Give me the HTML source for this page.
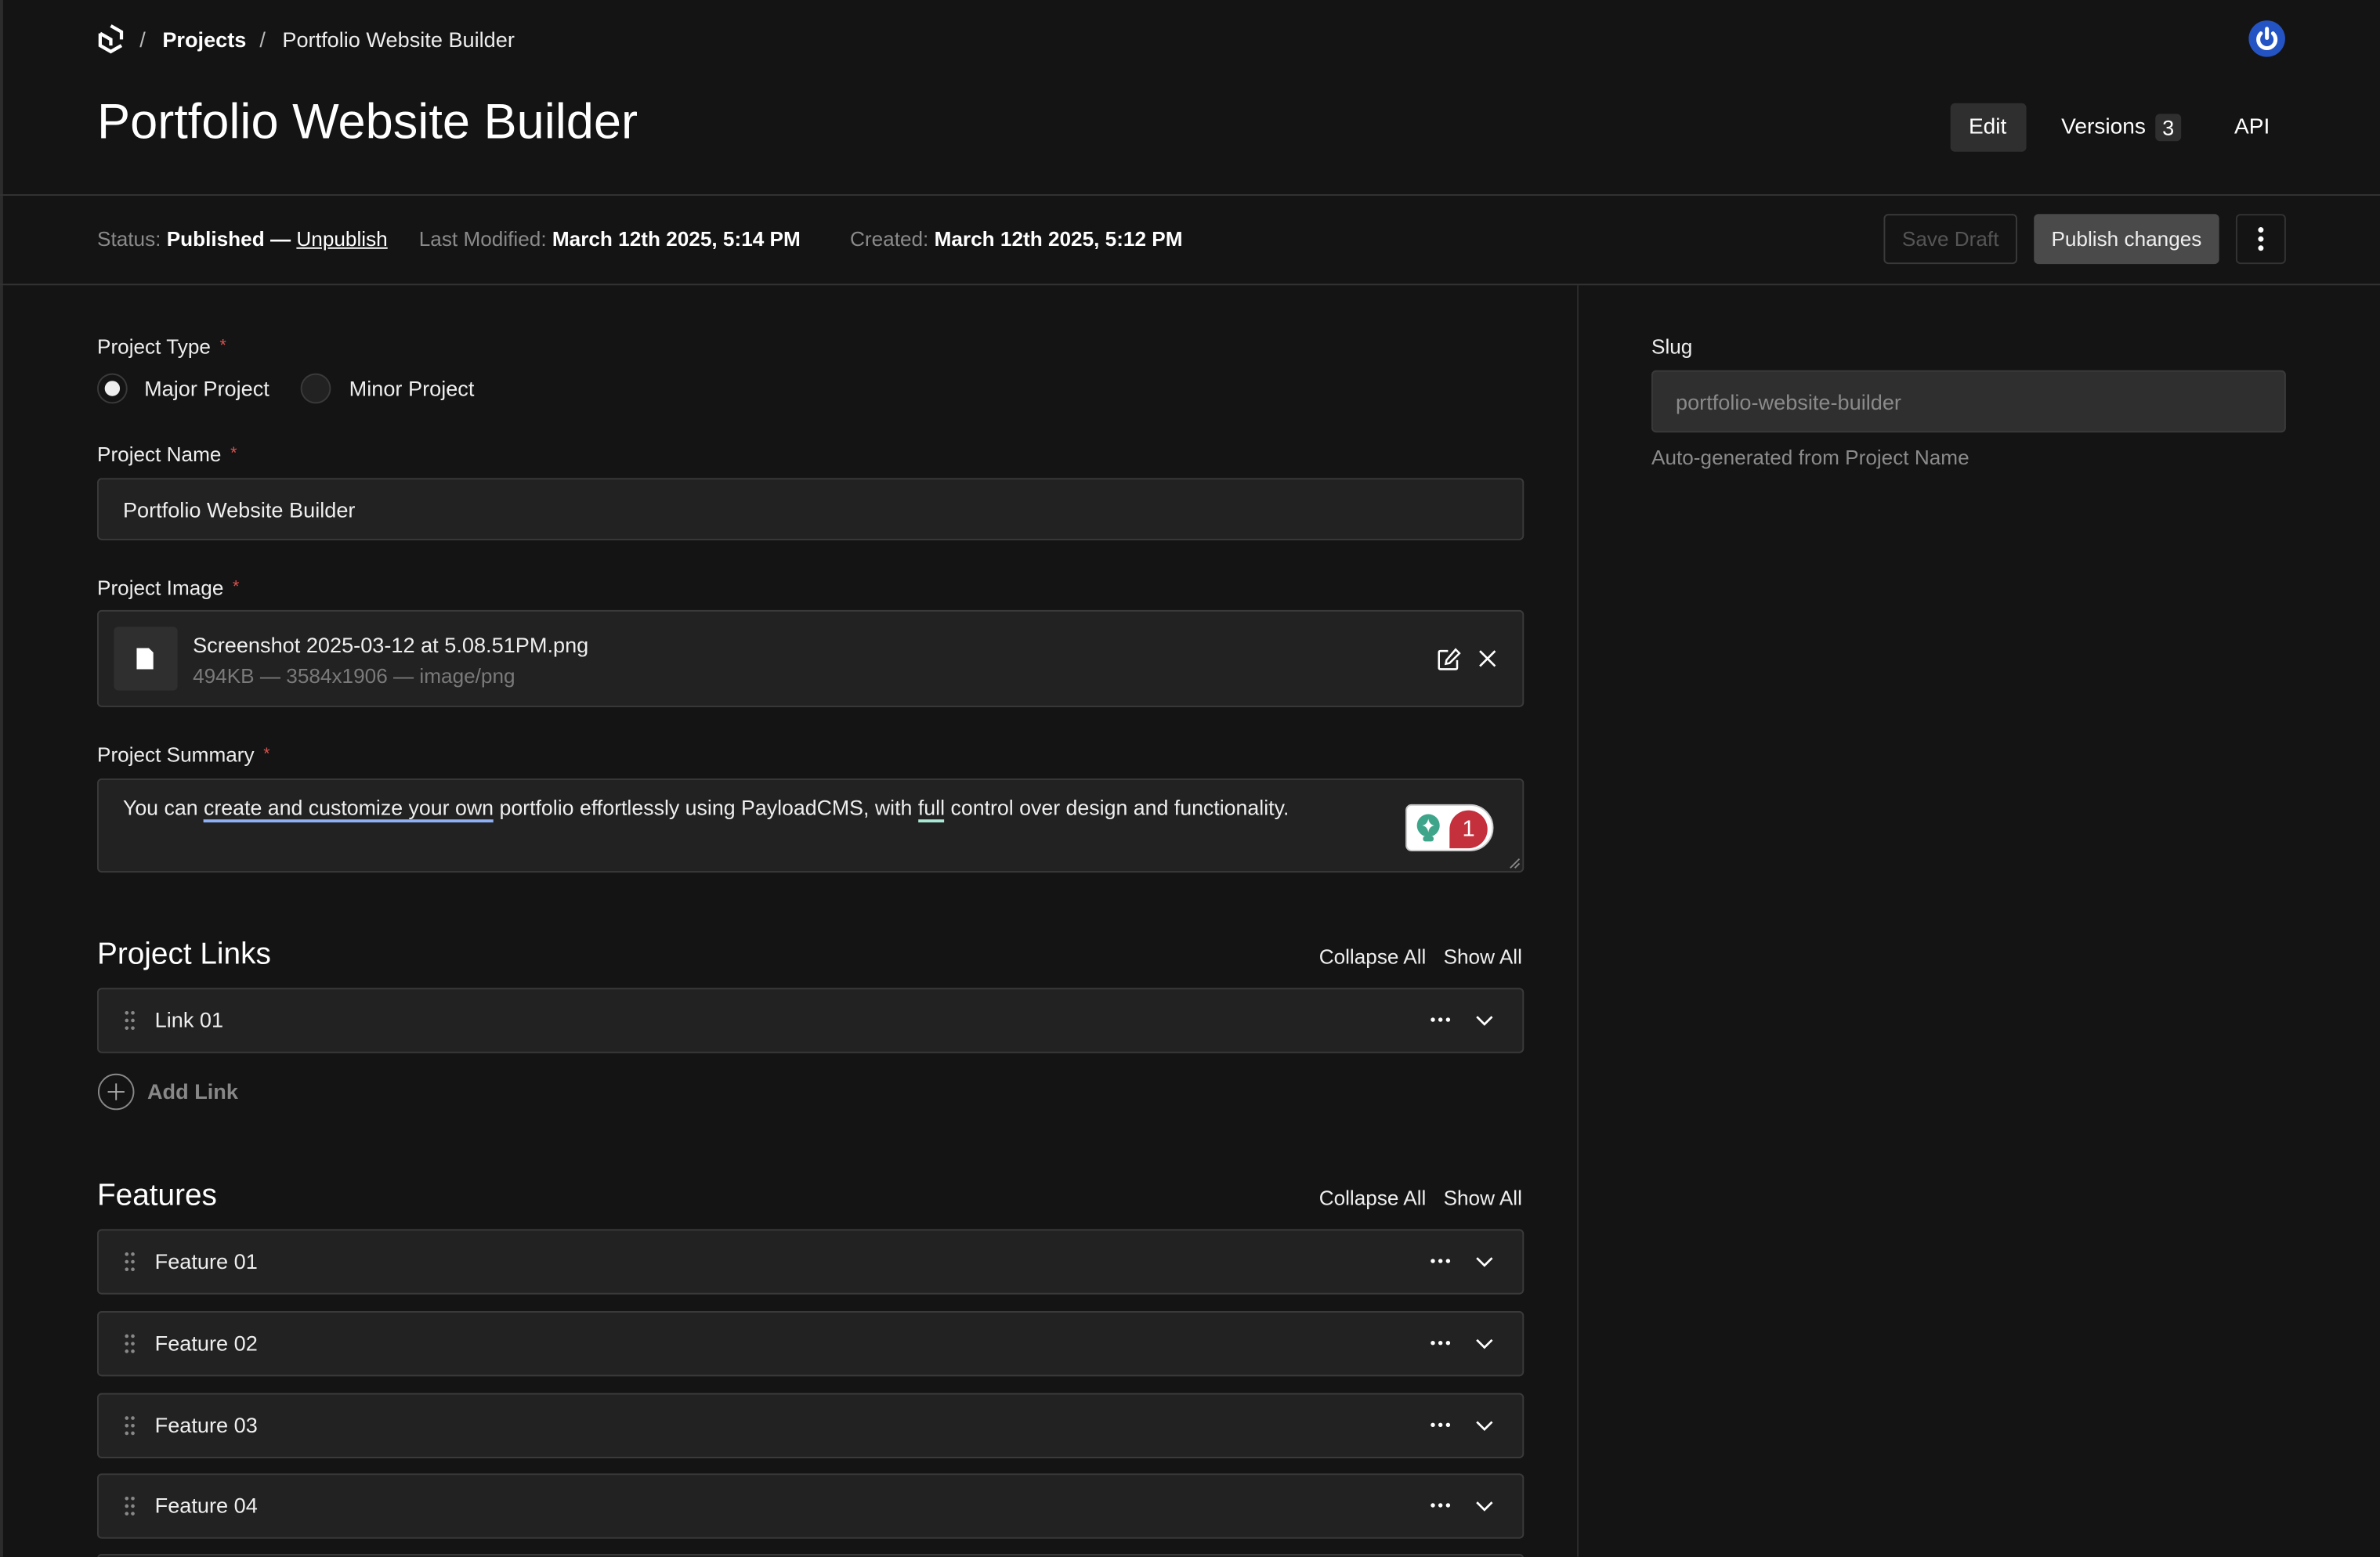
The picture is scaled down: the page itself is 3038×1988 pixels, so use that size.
<!DOCTYPE html>
<html><head><meta charset="utf-8"><style>
html,body{margin:0;padding:0;background:#141414;overflow:hidden;}
html{width:3038px;height:1988px;}
body{width:3038px;height:1988px;overflow:hidden;font-family:"Liberation Sans",sans-serif;color:#fff;position:relative;}
#s{position:absolute;left:0;top:0;width:1568px;height:1026px;overflow:hidden;transform:scale(1.9375);transform-origin:0 0;background:#141414;}
.a{position:absolute;white-space:nowrap;}
.lbl{font-size:13.5px;color:#eee;}
.req{color:#d9534f;font-size:11px;margin-left:6px;vertical-align:2px;}
.inp{position:absolute;background:#222;border:1px solid #3a3a3a;border-radius:3px;box-sizing:border-box;}
.row{position:absolute;left:64px;width:940px;height:43px;background:#222;border:1px solid #3a3a3a;border-radius:3px;box-sizing:border-box;}
.row .t{position:absolute;left:37px;top:12px;font-size:14px;color:#eee;}
.row .dr{position:absolute;left:17px;top:14px;}
.row .dots{position:absolute;left:877px;top:12px;}
.row .ch{position:absolute;left:906px;top:13px;}
.muted{color:#8a8a8a;}
</style></head><body><div id="s">
<div class="a" style="left:0;top:0;width:2px;height:1026px;background:#2c2c2c"></div>
<svg class="a" style="left:64px;top:16px" width="18" height="20" viewBox="0 0 18 20"><path d="M9 1 L16 5 V10 M2 6 V14 L9 18 L16 14" fill="none" stroke="#fff" stroke-width="2.2"/><path d="M2 6 L9 10 V14" fill="none" stroke="#fff" stroke-width="2.2"/></svg>
<div class="a" style="left:92px;top:18px;font-size:14px;color:#bbb">/</div>
<div class="a" style="left:107px;top:18px;font-size:14px;font-weight:bold">Projects</div>
<div class="a" style="left:171px;top:18px;font-size:14px;color:#bbb">/</div>
<div class="a" style="left:186px;top:18px;font-size:14px;color:#eee">Portfolio Website Builder</div>
<svg class="a" style="left:1481px;top:13px" width="25" height="25" viewBox="0 0 25 25"><circle cx="12.5" cy="12.5" r="12" fill="#2454c4"/><path d="M8.5 9 A5.7 5.7 0 1 0 16.5 9" fill="none" stroke="#fff" stroke-width="2.6" stroke-linecap="round"/><path d="M12.5 6 V12" stroke="#fff" stroke-width="2.6" stroke-linecap="round"/></svg>
<div class="a" style="left:64px;top:61px;font-size:32.6px;color:#fff">Portfolio Website Builder</div>
<div class="a" style="left:1285px;top:68px;width:50px;height:32px;background:#2f2f2f;border-radius:3px"></div>
<div class="a" style="left:1297px;top:76px;font-size:14.5px">Edit</div>
<div class="a" style="left:1358px;top:76px;font-size:14.5px">Versions</div>
<div class="a" style="left:1420px;top:75px;width:17px;height:18px;background:#2f2f2f;border-radius:3px;font-size:14px;text-align:center;line-height:18px">3</div>
<div class="a" style="left:1472px;top:76px;font-size:14.5px">API</div>
<div class="a" style="left:0;top:128px;width:1568px;height:1px;background:#333"></div>
<div class="a" style="left:64px;top:150px;font-size:13.5px"><span class="muted">Status: </span><b>Published — </b><u>Unpublish</u></div>
<div class="a" style="left:276px;top:150px;font-size:13.5px"><span class="muted">Last Modified: </span><b>March 12th 2025, 5:14 PM</b></div>
<div class="a" style="left:560px;top:150px;font-size:13.5px"><span class="muted">Created: </span><b>March 12th 2025, 5:12 PM</b></div>
<div class="a" style="left:1241px;top:141px;width:88px;height:33px;border:1px solid #3a3a3a;border-radius:3px;box-sizing:border-box;font-size:13.5px;color:#555;text-align:center;line-height:31px">Save Draft</div>
<div class="a" style="left:1340px;top:141px;width:122px;height:33px;background:#4a4a4a;border-radius:3px;font-size:13.5px;color:#eee;text-align:center;line-height:33px">Publish changes</div>
<div class="a" style="left:1473px;top:141px;width:33px;height:33px;border:1px solid #333;border-radius:3px;box-sizing:border-box"></div>
<svg class="a" style="left:1487px;top:149px" width="5" height="17"><circle cx="2.5" cy="2.5" r="1.8" fill="#fff"/><circle cx="2.5" cy="8.5" r="1.8" fill="#fff"/><circle cx="2.5" cy="14.5" r="1.8" fill="#fff"/></svg>
<div class="a" style="left:0;top:187px;width:1568px;height:1px;background:#333"></div>
<div class="a" style="left:1039px;top:188px;width:1px;height:838px;background:#2c2c2c"></div>
<div class="a lbl" style="left:64px;top:221px">Project Type<span class="req">*</span></div>
<div class="a" style="left:64px;top:246px;width:20px;height:20px;border-radius:50%;border:1px solid #3a3a3a;box-sizing:border-box;background:#141414"></div>
<div class="a" style="left:69px;top:251px;width:10px;height:10px;border-radius:50%;background:#eee"></div>
<div class="a" style="left:95px;top:248px;font-size:14px;color:#eee">Major Project</div>
<div class="a" style="left:198px;top:246px;width:20px;height:20px;border-radius:50%;border:1px solid #3a3a3a;box-sizing:border-box;background:#222"></div>
<div class="a" style="left:230px;top:248px;font-size:14px;color:#eee">Minor Project</div>
<div class="a lbl" style="left:64px;top:292px">Project Name<span class="req">*</span></div>
<div class="inp" style="left:64px;top:315px;width:940px;height:41px"></div>
<div class="a" style="left:81px;top:328px;font-size:14px;color:#eee">Portfolio Website Builder</div>
<div class="a lbl" style="left:64px;top:380px">Project Image<span class="req">*</span></div>
<div class="inp" style="left:64px;top:402px;width:940px;height:64px"></div>
<div class="a" style="left:75px;top:413px;width:42px;height:42px;background:#2f2f2f;border-radius:3px"></div>
<svg class="a" style="left:90px;top:427px" width="12" height="15"><path d="M0 0 H8 L11 3 V14 H0 Z" fill="#fff"/></svg>
<div class="a" style="left:127px;top:417px;font-size:14px;color:#eee">Screenshot 2025-03-12 at 5.08.51PM.png</div>
<div class="a" style="left:127px;top:438px;font-size:13.5px;color:#7a7a7a">494KB — 3584x1906 — image/png</div>
<svg class="a" style="left:947px;top:427px" width="16" height="15" viewBox="0 0 16 15"><path d="M7 2 H2 Q1 2 1 3 V13 Q1 14 2 14 H12 Q13 14 13 13 V8" fill="none" stroke="#fff" stroke-width="1.3"/><path d="M12 1 L14.5 3.5 L8 10 L5.5 10.5 L6 8 Z" fill="none" stroke="#fff" stroke-width="1.3"/></svg>
<svg class="a" style="left:974px;top:428px" width="12" height="12"><path d="M1 1 L11 11 M11 1 L1 11" stroke="#fff" stroke-width="1.4"/></svg>
<div class="a lbl" style="left:64px;top:490px">Project Summary<span class="req">*</span></div>
<div class="inp" style="left:64px;top:513px;width:940px;height:62px"></div>
<div class="a" style="left:81px;top:525px;font-size:13.8px;color:#eee">You can <span style="border-bottom:2px solid #8fb0f5">create and customize your own</span> portfolio effortlessly using PayloadCMS, with <span style="border-bottom:2px solid #a8e8d4">full</span> control over design and functionality.</div>
<div class="a" style="left:926px;top:530px;width:58px;height:31px;background:#fff;border-radius:4px 16px 16px 4px;border:1px solid #ccc;box-sizing:border-box"></div>
<svg class="a" style="left:932px;top:536px" width="18" height="21" viewBox="0 0 18 21"><circle cx="9" cy="8" r="7.5" fill="#3fa58a"/><path d="M9 3.5 Q9.6 7.4 13 8 Q9.6 8.6 9 12.5 Q8.4 8.6 5 8 Q8.4 7.4 9 3.5 Z" fill="#fff"/><rect x="5.5" y="15" width="7" height="3.5" rx="1.5" fill="#3fa58a"/></svg>
<div class="a" style="left:955px;top:534px;width:25px;height:25px;background:#c4303c;border-radius:13px 13px 13px 0;color:#fff;font-size:15px;text-align:center;line-height:25px">1</div>
<svg class="a" style="left:994px;top:565px" width="8" height="8"><path d="M1 7 L7 1 M4 7 L7 4" stroke="#888" stroke-width="1"/></svg>
<div class="a" style="left:64px;top:618px;font-size:20px">Project Links</div>
<div class="a" style="left:869px;top:623px;font-size:13.5px;color:#eee">Collapse All</div>
<div class="a" style="left:951px;top:623px;font-size:13.5px;color:#eee">Show All</div>
<div class="row" style="top:651px">
<svg class="dr" width="7" height="13"><g fill="#888"><circle cx="1.5" cy="1.5" r="1.2"/><circle cx="5.5" cy="1.5" r="1.2"/><circle cx="1.5" cy="6.5" r="1.2"/><circle cx="5.5" cy="6.5" r="1.2"/><circle cx="1.5" cy="11.5" r="1.2"/><circle cx="5.5" cy="11.5" r="1.2"/></g></svg>
<div class="t">Link 01</div>
<svg class="dots" width="14" height="16"><g fill="#fff"><circle cx="2" cy="8" r="1.4"/><circle cx="7" cy="8" r="1.4"/><circle cx="12" cy="8" r="1.4"/></g></svg>
<svg class="ch" width="14" height="14"><path d="M2 5 L7 10 L12 5" fill="none" stroke="#fff" stroke-width="1.4"/></svg>
</div>
<svg class="a" style="left:64px;top:707px" width="25" height="25"><circle cx="12.5" cy="12.5" r="11.5" fill="none" stroke="#888" stroke-width="1"/><path d="M12.5 7 V18 M7 12.5 H18" stroke="#aaa" stroke-width="1"/></svg>
<div class="a" style="left:97px;top:711px;font-size:14px;font-weight:bold;color:#888">Add Link</div>
<div class="a" style="left:64px;top:777px;font-size:20px">Features</div>
<div class="a" style="left:869px;top:782px;font-size:13.5px;color:#eee">Collapse All</div>
<div class="a" style="left:951px;top:782px;font-size:13.5px;color:#eee">Show All</div>
<div class="row" style="top:810px"><svg class="dr" width="7" height="13"><g fill="#888"><circle cx="1.5" cy="1.5" r="1.2"/><circle cx="5.5" cy="1.5" r="1.2"/><circle cx="1.5" cy="6.5" r="1.2"/><circle cx="5.5" cy="6.5" r="1.2"/><circle cx="1.5" cy="11.5" r="1.2"/><circle cx="5.5" cy="11.5" r="1.2"/></g></svg><div class="t">Feature 01</div><svg class="dots" width="14" height="16"><g fill="#fff"><circle cx="2" cy="8" r="1.4"/><circle cx="7" cy="8" r="1.4"/><circle cx="12" cy="8" r="1.4"/></g></svg><svg class="ch" width="14" height="14"><path d="M2 5 L7 10 L12 5" fill="none" stroke="#fff" stroke-width="1.4"/></svg></div>
<div class="row" style="top:864px"><svg class="dr" width="7" height="13"><g fill="#888"><circle cx="1.5" cy="1.5" r="1.2"/><circle cx="5.5" cy="1.5" r="1.2"/><circle cx="1.5" cy="6.5" r="1.2"/><circle cx="5.5" cy="6.5" r="1.2"/><circle cx="1.5" cy="11.5" r="1.2"/><circle cx="5.5" cy="11.5" r="1.2"/></g></svg><div class="t">Feature 02</div><svg class="dots" width="14" height="16"><g fill="#fff"><circle cx="2" cy="8" r="1.4"/><circle cx="7" cy="8" r="1.4"/><circle cx="12" cy="8" r="1.4"/></g></svg><svg class="ch" width="14" height="14"><path d="M2 5 L7 10 L12 5" fill="none" stroke="#fff" stroke-width="1.4"/></svg></div>
<div class="row" style="top:918px"><svg class="dr" width="7" height="13"><g fill="#888"><circle cx="1.5" cy="1.5" r="1.2"/><circle cx="5.5" cy="1.5" r="1.2"/><circle cx="1.5" cy="6.5" r="1.2"/><circle cx="5.5" cy="6.5" r="1.2"/><circle cx="1.5" cy="11.5" r="1.2"/><circle cx="5.5" cy="11.5" r="1.2"/></g></svg><div class="t">Feature 03</div><svg class="dots" width="14" height="16"><g fill="#fff"><circle cx="2" cy="8" r="1.4"/><circle cx="7" cy="8" r="1.4"/><circle cx="12" cy="8" r="1.4"/></g></svg><svg class="ch" width="14" height="14"><path d="M2 5 L7 10 L12 5" fill="none" stroke="#fff" stroke-width="1.4"/></svg></div>
<div class="row" style="top:971px"><svg class="dr" width="7" height="13"><g fill="#888"><circle cx="1.5" cy="1.5" r="1.2"/><circle cx="5.5" cy="1.5" r="1.2"/><circle cx="1.5" cy="6.5" r="1.2"/><circle cx="5.5" cy="6.5" r="1.2"/><circle cx="1.5" cy="11.5" r="1.2"/><circle cx="5.5" cy="11.5" r="1.2"/></g></svg><div class="t">Feature 04</div><svg class="dots" width="14" height="16"><g fill="#fff"><circle cx="2" cy="8" r="1.4"/><circle cx="7" cy="8" r="1.4"/><circle cx="12" cy="8" r="1.4"/></g></svg><svg class="ch" width="14" height="14"><path d="M2 5 L7 10 L12 5" fill="none" stroke="#fff" stroke-width="1.4"/></svg></div>
<div class="row" style="top:1024px"></div>
<div class="a lbl" style="left:1088px;top:221px">Slug</div>
<div class="inp" style="left:1088px;top:244px;width:418px;height:41px;background:#2f2f2f"></div>
<div class="a" style="left:1104px;top:257px;font-size:14px;color:#8a8a8a">portfolio-website-builder</div>
<div class="a" style="left:1088px;top:294px;font-size:13.5px;color:#8a8a8a">Auto-generated from Project Name</div>
</div></body></html>
